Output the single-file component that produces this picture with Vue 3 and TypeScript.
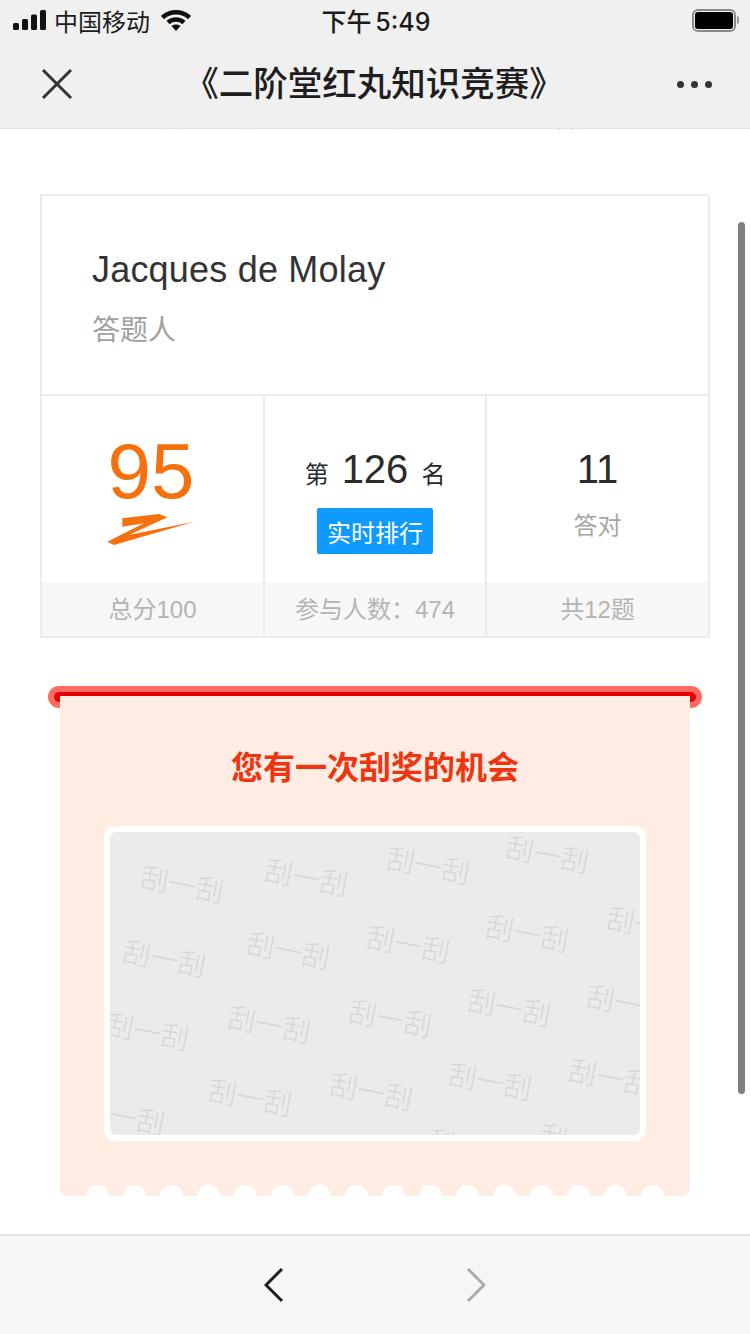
<template>
  <div class="phone">
    <div class="top-bar">
      <div class="status">
        <div class="status-left">
          <svg class="signal" width="36" height="20" viewBox="0 0 36 20">
            <rect x="0" y="13" width="6" height="7" rx="1.5" />
            <rect x="9" y="9" width="6" height="11" rx="1.5" />
            <rect x="18" y="4.5" width="6" height="15.5" rx="1.5" />
            <rect x="27" y="0" width="6" height="20" rx="1.5" />
          </svg>
          <span class="carrier">中国移动</span>
          <svg class="wifi" width="30" height="22" viewBox="0 0 30 22">
            <path d="M1.500 7.500C9 .5 21 .5 28.500 7.500" />
            <path d="M7 12.500C11.500 8.500 18.500 8.500 23 12.500" />
            <path class="wifi-dot" d="M10.500 16C13 14 17 14 19.500 16L15 21Z" />
          </svg>
        </div>
        <span class="clock">下午 5:49</span>
        <div class="battery">
          <div class="battery-body"><div class="battery-fill"></div></div>
          <div class="battery-tip"></div>
        </div>
      </div>
      <div class="nav">
        <svg class="close" width="32" height="32" viewBox="0 0 32 32">
          <path d="M2 2L30 30M30 2L2 30" />
        </svg>
        <span class="nav-title">《二阶堂红丸知识竞赛》</span>
        <div class="more"><i></i><i></i><i></i></div>
      </div>
    </div>

    <div class="content">
      <div class="peek"><span>答题活动的规则说明与奖品</span></div>

      <section class="score-card">
        <div class="person">
          <div class="person-name">Jacques de Molay</div>
          <div class="person-role">答题人</div>
        </div>
        <div class="stats">
          <div class="stat">
            <div class="stat-main">
              <div class="score">95</div>
              <svg class="score-mark" width="88" height="32" viewBox="0 0 88 32">
                <path d="M16.300 4.300L53 0L61.300 3.300L23 21L88 7.700L8 31L1.300 27.700L38 9.300L16.300 12.700Z" />
              </svg>
            </div>
            <div class="stat-foot">总分100</div>
          </div>
          <div class="stat">
            <div class="stat-main">
              <div class="rank">
                <span>第</span><b>126</b><span>名</span>
              </div>
              <button class="rank-btn">实时排行</button>
            </div>
            <div class="stat-foot">参与人数：474</div>
          </div>
          <div class="stat">
            <div class="stat-main">
              <div class="right-count">11</div>
              <div class="right-label">答对</div>
            </div>
            <div class="stat-foot">共12题</div>
          </div>
        </div>
      </section>

      <section class="coupon">
        <div class="coupon-slot"></div>
        <div class="coupon-paper">
          <h2 class="coupon-title">您有一次刮奖的机会</h2>
          <div class="scratch">
            <div class="scratch-area">
              <span
                v-for="(m, i) in marks"
                :key="i"
                class="mark"
                :style="{ left: m[0] - 110 + 'px', top: m[1] - 830 + 'px' }"
              >刮一刮</span>
            </div>
          </div>
          <div class="scallops">
            <i v-for="n in 16" :key="n"></i>
          </div>
        </div>
      </section>

      <div class="scrollbar"></div>
    </div>

    <div class="bottom-bar">
      <svg class="arrow" width="20" height="36" viewBox="0 0 20 36">
        <path d="M18 2L2 18L18 34" />
      </svg>
      <svg class="arrow arrow-off" width="20" height="36" viewBox="0 0 20 36">
        <path d="M2 2L18 18L2 34" />
      </svg>
    </div>
  </div>
</template>

<script setup lang="ts">
// 水印中心点坐标，直接按页面坐标记录
const marks: [number, number][] = [
  [182, 884], [306, 877], [428, 865], [547, 854],
  [648, 925],
  [164, 958], [288, 950], [408, 944], [527, 933],
  [147, 1031], [269, 1024], [390, 1018], [509, 1007], [628, 1003],
  [123, 1116], [250, 1097], [371, 1091], [490, 1081], [610, 1077],
  [468, 1147], [581, 1142]
]
</script>

<style>
html,
body {
  margin: 0;
  background: #fff;
}
</style>

<style scoped>
.phone {
  width: 750px;
  height: 1334px;
  display: flex;
  flex-direction: column;
  overflow: hidden;
  background: #fff;
  color: #222;
  font-family: "Liberation Sans", "Noto Sans CJK SC", sans-serif;
}

.top-bar {
  height: 128px;
  flex: none;
  background: #f0f0f0;
  border-bottom: 1px solid #e2e2e2;
  box-sizing: content-box;
}

.status {
  height: 40px;
  display: grid;
  grid-template-columns: 1fr auto 1fr;
  align-items: center;
  padding: 0 11px 0 13px;
}

.status-left {
  display: flex;
  align-items: center;
}

.signal {
  fill: #111;
}

.carrier {
  margin-left: 5px;
  font-size: 24px;
  color: #1c1c1c;
}

.wifi {
  margin-left: 11px;
  margin-top: 1px;
}

.wifi path {
  fill: none;
  stroke: #111;
  stroke-width: 4.500;
}

.wifi .wifi-dot {
  fill: #111;
  stroke: none;
}

.clock {
  font-family: Inter, "Noto Sans CJK SC", sans-serif;
  font-size: 25px;
  word-spacing: -3px;
  color: #1c1c1c;
  font-weight: 500;
}

.battery {
  justify-self: end;
  display: flex;
  align-items: center;
}

.battery-body {
  width: 44px;
  height: 23px;
  padding: 1px;
  border: 2px solid #8a8a8a;
  border-radius: 6px;
  box-sizing: border-box;
  display: flex;
}

.battery-fill {
  flex: 1;
  background: #000;
  border-radius: 3px;
}

.battery-tip {
  width: 2px;
  height: 8px;
  margin-left: 1px;
  background: #999;
  border-radius: 0 2px 2px 0;
}

.nav {
  height: 88px;
  display: flex;
  align-items: center;
  justify-content: space-between;
  padding: 0 38px 0 41px;
}

.close path {
  fill: none;
  stroke: #333;
  stroke-width: 3;
}

.nav-title {
  font-size: 34.500px;
  line-height: 44px;
  margin-top: -1px;
  margin-right: 2px;
  font-weight: 500;
  color: #1e1e1e;
  text-spacing-trim: space-all;
  font-feature-settings: "chws" 0;
}

.more {
  display: flex;
  gap: 7px;
}

.more i {
  width: 7px;
  height: 7px;
  border-radius: 50%;
  background: #333;
}

.content {
  position: relative;
  flex: 1;
  min-height: 0;
  padding: 0 40px;
}

.peek {
  height: 3px;
  overflow: hidden;
  text-align: center;
  margin: 0 0 62px;
}

.peek span {
  display: block;
  font-size: 28px;
  line-height: 28px;
  margin-top: -25px;
  color: #c4c4c4;
  letter-spacing: 8px;
}

.score-card {
  border: 2px solid #ececec;
  background: #fff;
}

.person {
  height: 200px;
  padding: 50px 0 0 50px;
  box-sizing: border-box;
  border-bottom: 2px solid #ececec;
}

.person-name {
  font-size: 36px;
  line-height: 48px;
  letter-spacing: 0.2px;
  color: #333;
}

.person-role {
  margin-top: 19px;
  font-size: 28px;
  line-height: 36px;
  color: #a0a0a0;
}

.stats {
  display: grid;
  grid-template-columns: 221px 222px 223px;
}

.stat {
  border-left: 2px solid #ececec;
}

.stat:first-child {
  border-left: 0;
}

.stat-main {
  height: 186px;
  display: flex;
  flex-direction: column;
  align-items: center;
}

.score {
  margin: 36px 0 0 -3px;
  font-size: 78px;
  line-height: 78px;
  color: #f6700d;
}

.score-mark {
  margin: 4px 0 0 -6px;
  fill: #f6700d;
}

.rank {
  margin-top: 50px;
  display: flex;
  align-items: baseline;
  gap: 13px;
  font-size: 24px;
  line-height: 46px;
  color: #2a2a2a;
}

.rank b {
  font-size: 40px;
  font-weight: 400;
}

.rank-btn {
  margin-top: 10px;
  width: 116px;
  height: 46px;
  padding: 0;
  border: 0;
  border-radius: 2px;
  background: #0f9aff;
  color: #fff;
  font: inherit;
  font-size: 24px;
}

.right-count {
  margin-top: 50px;
  font-size: 40px;
  line-height: 46px;
  color: #2a2a2a;
}

.right-label {
  margin-top: 17px;
  font-size: 24px;
  line-height: 34px;
  color: #a6a6a6;
}

.stat-foot {
  height: 54px;
  background: #f7f7f7;
  text-align: center;
  font-size: 24px;
  line-height: 56px;
  color: #b4b4b4;
}

.coupon {
  position: relative;
  margin-top: 48px;
  padding: 10px 20px 0;
}

.coupon-slot {
  position: absolute;
  left: 8px;
  right: 8px;
  top: 0;
  height: 22px;
  border-radius: 11px;
  background: #ff6b63;
}

.coupon-slot::after {
  content: "";
  position: absolute;
  left: 6px;
  right: 6px;
  top: 6px;
  height: 10px;
  border-radius: 5px;
  background: #e80000;
}

.coupon-paper {
  position: relative;
  height: 500px;
  background: #ffede4;
  border-radius: 0 0 8px 8px;
  overflow: hidden;
}

.coupon-title {
  margin: 0;
  padding-top: 51px;
  text-align: center;
  font-size: 32px;
  line-height: 42px;
  font-weight: 700;
  color: #ef3410;
}

.scratch {
  margin: 37px 44px 0;
  padding: 6px;
  height: 315px;
  box-sizing: border-box;
  background: #fff;
  border-radius: 12px;
}

.scratch-area {
  position: relative;
  height: 303px;
  overflow: hidden;
  border-radius: 6px;
  background: #ebebeb;
}

.mark {
  position: absolute;
  transform: translate(-50%, -50%) rotate(11deg);
  font-size: 28px;
  line-height: 32px;
  font-weight: 300;
  white-space: nowrap;
  color: #d6d6d6;
}

.scallops {
  position: absolute;
  left: 26px;
  right: 26px;
  bottom: -12px;
  display: flex;
  justify-content: space-between;
}

.scallops i {
  width: 23px;
  height: 23px;
  border-radius: 50%;
  background: #fff;
}

.scrollbar {
  position: absolute;
  left: 738px;
  top: 93px;
  width: 7px;
  height: 872px;
  border-radius: 4px;
  background: #808080;
}

.bottom-bar {
  height: 98px;
  flex: none;
  border-top: 2px solid #e4e4e4;
  background: #f6f6f6;
  display: flex;
  align-items: center;
  justify-content: center;
  gap: 182px;
}

.arrow path {
  fill: none;
  stroke: #1c1c1c;
  stroke-width: 3;
}

.arrow-off path {
  stroke: #ababab;
}
</style>
